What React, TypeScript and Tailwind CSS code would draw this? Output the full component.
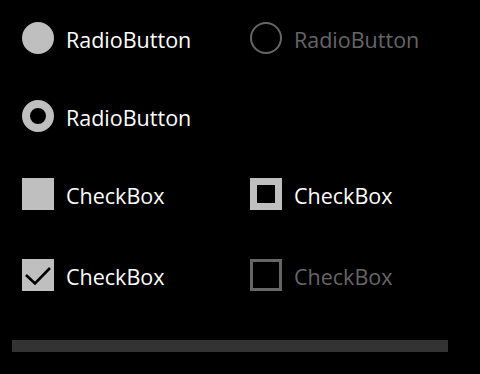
const font = { fontFamily: '"Open Sans", "Noto Sans", sans-serif' };

function Label({ text, disabled }: { text: string; disabled?: boolean }) {
  return (
    <span className={`pt-[3px] text-[21.5px] leading-none ${disabled ? 'text-[#666666]' : 'text-white'}`} style={font}>
      {text}
    </span>
  );
}

export default function App() {
  return (
    <div className="w-[480px] h-[374px] bg-black overflow-hidden">
      <div className="pt-[22px] pl-[22px]">
        <div className="grid grid-cols-[228px_1fr] h-[32px] items-center">
          <div className="flex items-center gap-[12px]">
            <div className="w-8 h-8 rounded-full bg-[#bfbfbf]" />
            <Label text="RadioButton" />
          </div>
          <div className="flex items-center gap-[12px]">
            <div className="w-8 h-8 rounded-full border-[2.5px] border-[#666666]" />
            <Label text="RadioButton" disabled />
          </div>
        </div>

        <div className="grid grid-cols-[228px_1fr] h-[32px] items-center mt-[46px]">
          <div className="flex items-center gap-[12px]">
            <div className="w-8 h-8 rounded-full border-8 border-[#bfbfbf]" />
            <Label text="RadioButton" />
          </div>
        </div>

        <div className="grid grid-cols-[228px_1fr] h-[32px] items-center mt-[46px]">
          <div className="flex items-center gap-[12px]">
            <div className="w-8 h-8 bg-[#bfbfbf]" />
            <Label text="CheckBox" />
          </div>
          <div className="flex items-center gap-[12px]">
            <div className="w-8 h-8 border-[7.5px] border-[#bfbfbf]" />
            <Label text="CheckBox" />
          </div>
        </div>

        <div className="grid grid-cols-[228px_1fr] h-[32px] items-center mt-[49px]">
          <div className="flex items-center gap-[12px]">
            <div className="w-8 h-8 bg-[#bfbfbf]">
              <svg width="32" height="32" viewBox="0 0 32 32">
                <path d="M4 16 L13 24.5 L28 9" fill="none" stroke="#000" strokeWidth="2.6" />
              </svg>
            </div>
            <Label text="CheckBox" />
          </div>
          <div className="flex items-center gap-[12px]">
            <div className="w-8 h-8 border-[3px] border-[#666666]" />
            <Label text="CheckBox" disabled />
          </div>
        </div>
      </div>

      <div className="mt-[49px] ml-[12px] w-[436px] h-[12px] bg-[#333333]" />
    </div>
  );
}
